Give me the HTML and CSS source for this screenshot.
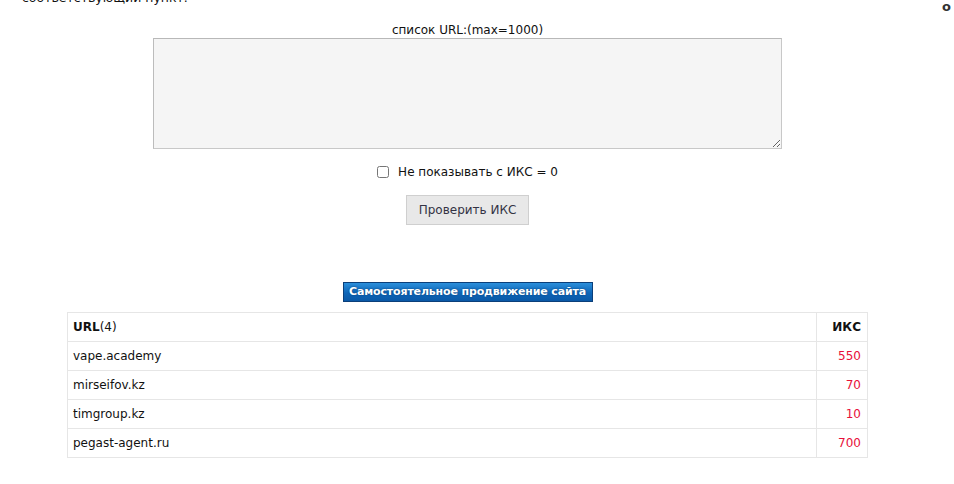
FILE: index.html
```html
<!DOCTYPE html>
<html lang="ru">
<head>
<meta charset="utf-8">
<link rel="stylesheet" href="styles.css">
</head>
<body>
<div class="page">
  <div class="topline">
    <p class="intro">соответствующий пункт.</p>
    <span class="ring">o</span>
  </div>
  <form class="form">
    <label class="label" for="urls">список URL:(max=1000)</label>
    <textarea id="urls" class="urls"></textarea>
    <label class="check"><input type="checkbox" class="cb"><span>Не показывать с ИКС = 0</span></label>
    <button type="button" class="submit">Проверить ИКС</button>
  </form>
  <div class="promo-row"><a class="promo">Самостоятельное продвижение сайта</a></div>
  <table class="results">
    <thead>
      <tr><th class="c-url"><b>URL</b>(4)</th><th class="c-iks">ИКС</th></tr>
    </thead>
    <tbody>
      <tr><td>vape.academy</td><td class="num">550</td></tr>
      <tr><td>mirseifov.kz</td><td class="num">70</td></tr>
      <tr><td>timgroup.kz</td><td class="num">10</td></tr>
      <tr><td>pegast-agent.ru</td><td class="num">700</td></tr>
    </tbody>
  </table>
</div>
</body>
</html>
```
FILE: styles.css
```css
html, body {
  margin: 0;
  padding: 0;
  background: #fff;
}
body {
  font-family: "DejaVu Sans", Verdana, sans-serif;
  font-size: 12px;
  color: #000;
  overflow: hidden;
}
.page {
  width: 935px;
}
.topline {
  display: flex;
  justify-content: space-between;
  height: 22px;
}
.intro {
  margin: -10px 0 0 22px;
  font-size: 12.5px;
  line-height: 16px;
  color: #111;
}
.ring {
  margin: 0 -16px 0 0;
  font-weight: bold;
  font-size: 13px;
  color: #333;
  line-height: 14px;
}
.form {
  display: flex;
  flex-direction: column;
  align-items: center;
  margin: 0;
}
.label {
  line-height: 16px;
  color: #111;
}
.urls {
  box-sizing: border-box;
  width: 629px;
  height: 111px;
  margin: 0;
  background: #f5f5f5;
  border: 1px solid #c8c8c8;
  border-top-color: #b8b8b8;
  border-left-color: #bcbcbc;
  padding: 2px;
  resize: both;
}
.check {
  display: flex;
  align-items: center;
  margin-top: 15px;
  color: #111;
  font-size: 12px;
  line-height: 16px;
}
.cb {
  margin: 0 9px 0 0;
  width: 12px;
  height: 12px;
}
.submit {
  margin-top: 15px;
  width: 123px;
  height: 30px;
  background: #e8e8e8;
  border: 1px solid #cfcfcf;
  color: #333344;
  font-family: "DejaVu Sans", Verdana, sans-serif;
  font-size: 12px;
  padding: 0;
}
.promo-row {
  display: flex;
  justify-content: center;
  margin-top: 57px;
}
.promo {
  display: block;
  box-sizing: border-box;
  width: 250px;
  height: 20px;
  line-height: 18px;
  text-align: center;
  color: #fff;
  font-weight: bold;
  font-size: 11px;
  font-family: "DejaVu Sans", Tahoma, sans-serif;
  background: linear-gradient(#2b8fdb, #0e66b8 55%, #0a58a6);
  border: 1px solid #0b3f7a;
  text-shadow: 0 0 2px #063a70;
  letter-spacing: -0.15px;
}
.results {
  margin: 10px 0 0 67px;
  width: 801px;
  border-collapse: collapse;
  border: 1px solid #e6e6e6;
}
.results th, .results td {
  height: 28px;
  padding: 0 6px 0 5px;
  border: 1px solid #e6e6e6;
  font-size: 12px;
  color: #111;
}
.results th {
  font-weight: normal;
  text-align: left;
}
.results th b {
  font-weight: bold;
}
.results th.c-iks {
  width: 39px;
  text-align: right;
  font-weight: bold;
}
.results td.num {
  text-align: right;
  color: #e8103a;
}
```
